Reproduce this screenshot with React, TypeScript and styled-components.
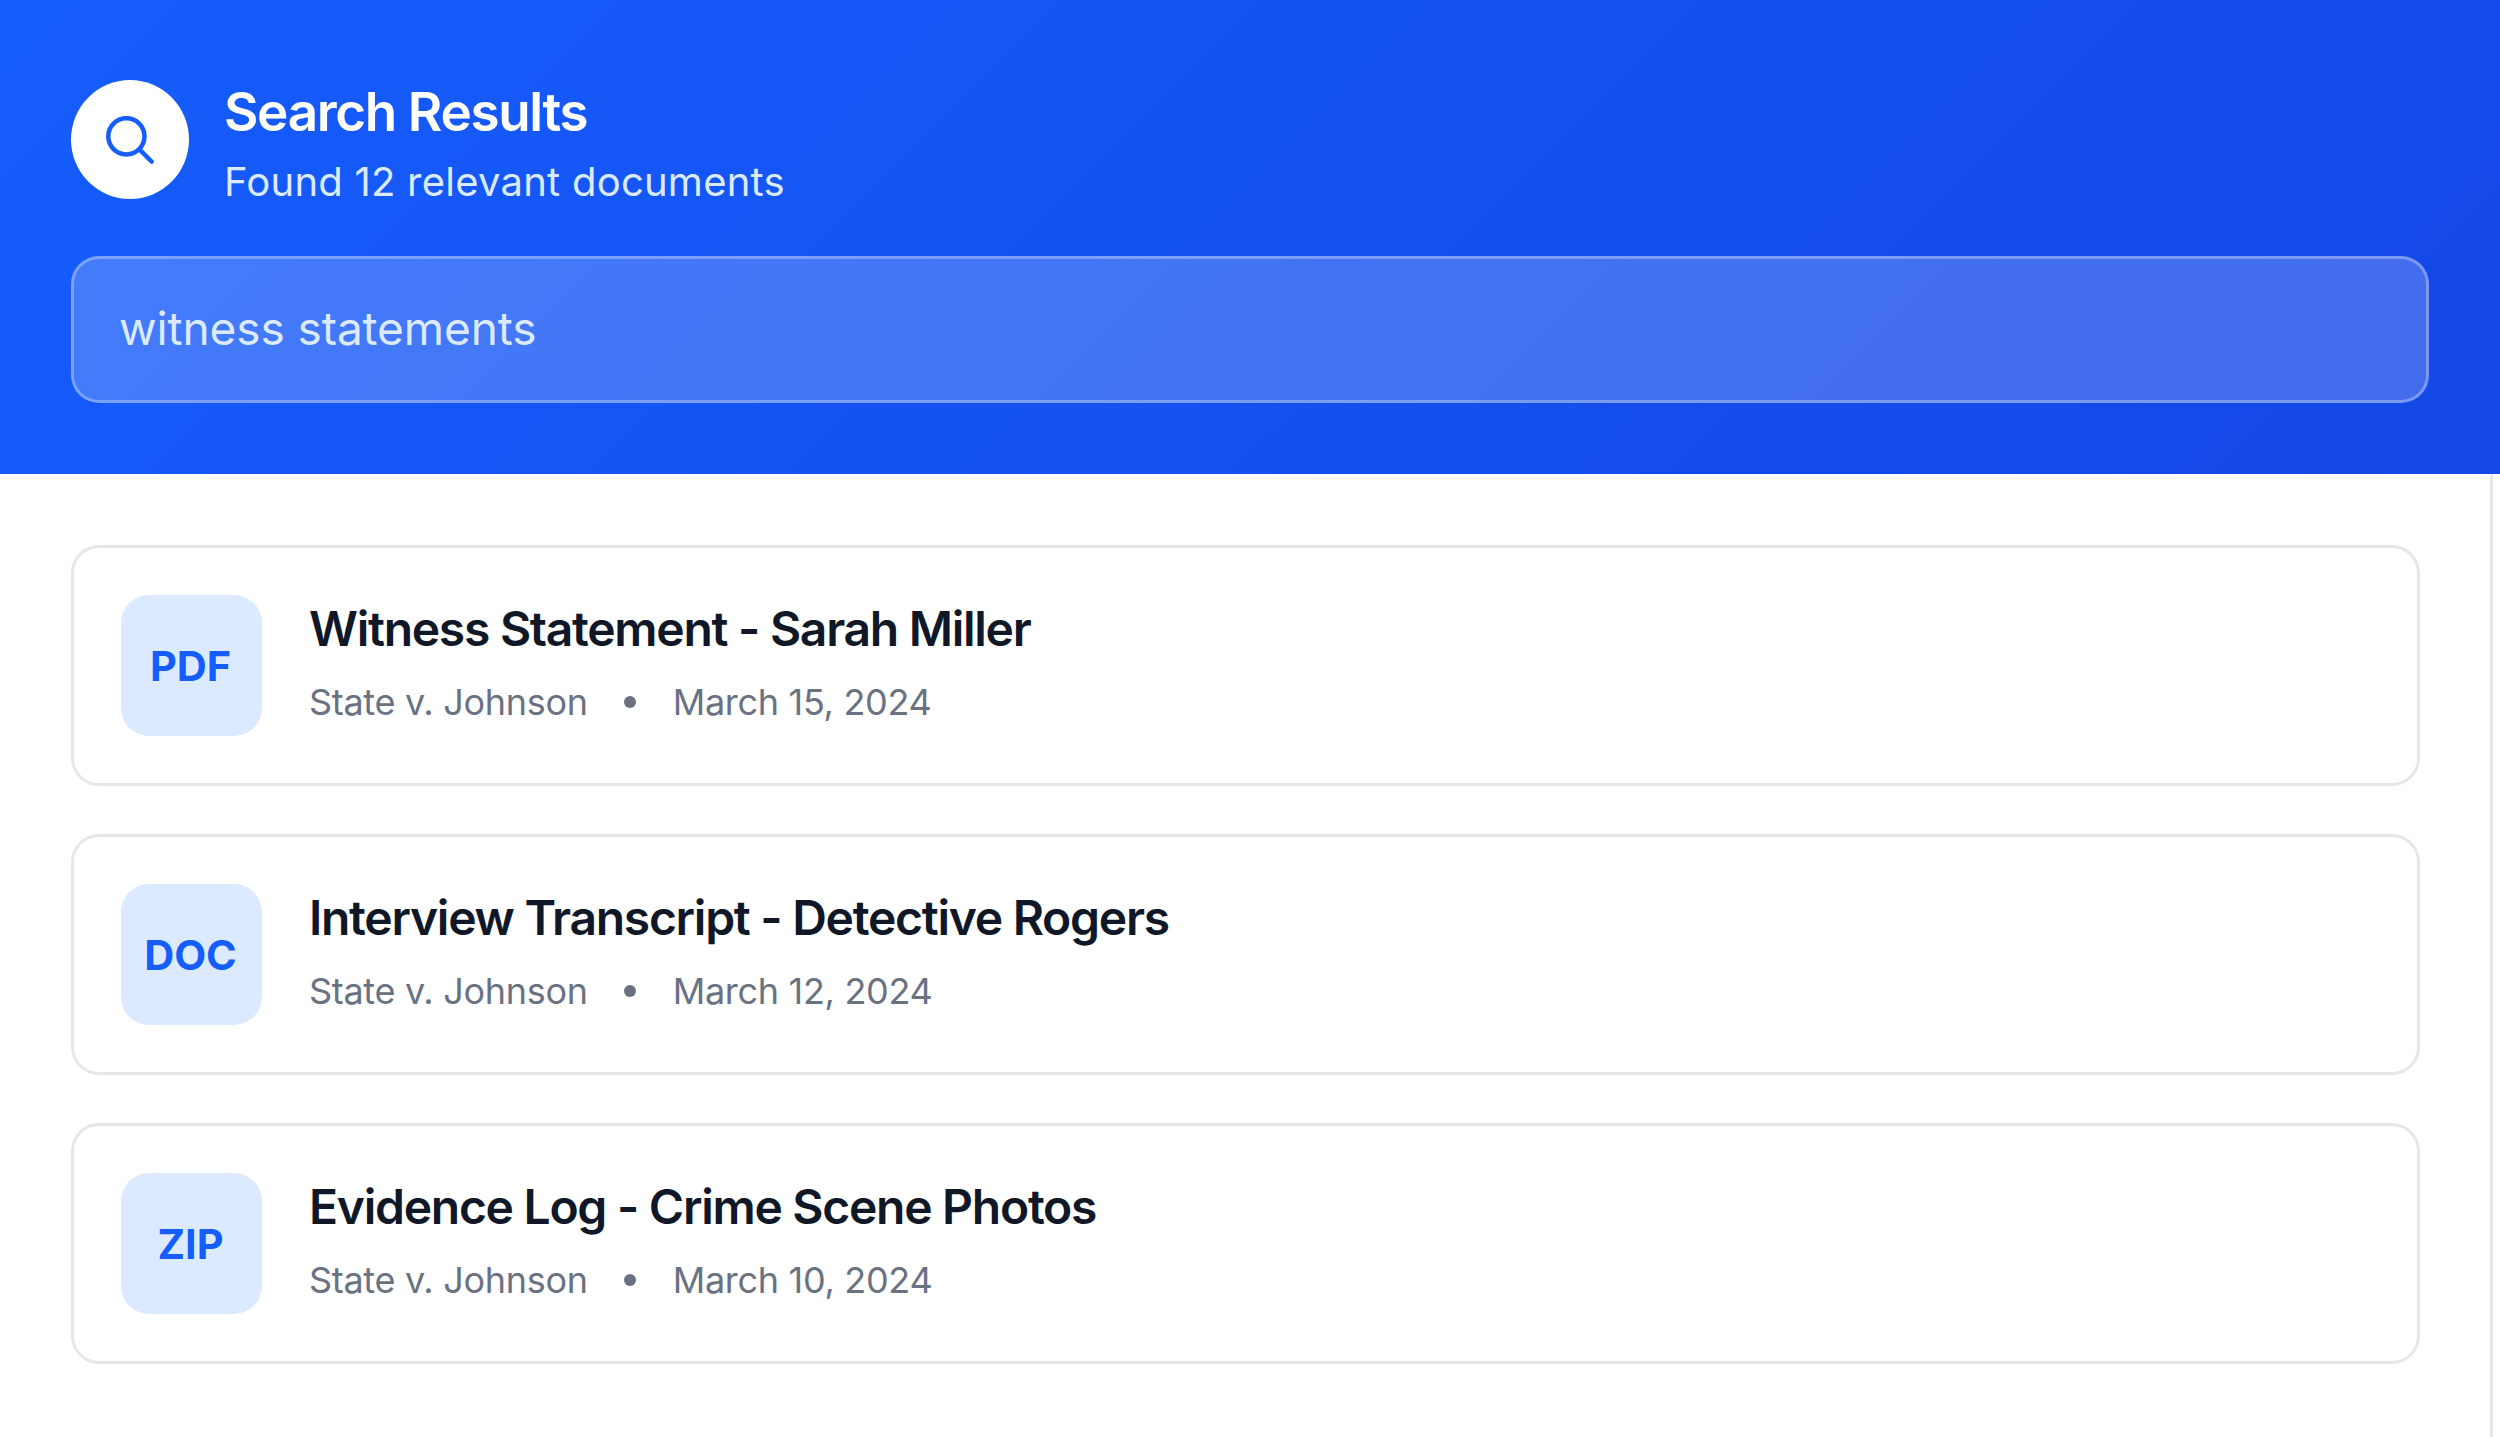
import React from "react";
import styled, { createGlobalStyle } from "styled-components";

const Global = createGlobalStyle`
  html, body { margin: 0; padding: 0; background: #fff; }
  body { font-family: Inter, "Liberation Sans", sans-serif; }
`;
const Page = styled.div`
  width: 2500px;
  height: 1437px;
  overflow: hidden;
  display: flex;
  flex-direction: column;
`;
const Header = styled.header`
  height: 474px;
  box-sizing: border-box;
  padding: 80px 71px 0;
  background: linear-gradient(135deg, #155dfc 0%, #1447e6 100%);
  display: flex;
  flex-direction: column;
  gap: 57px;
`;
const HeaderRow = styled.div`
  display: flex;
  align-items: center;
  gap: 36px;
`;
const IconCircle = styled.div`
  width: 118px;
  height: 119px;
  border-radius: 50%;
  background: #fff;
  display: flex;
  align-items: center;
  justify-content: center;
  flex: none;
`;
const HeadingText = styled.div`
  display: flex;
  flex-direction: column;
  gap: 30px;
  padding-top: 9px;
`;
const Title = styled.h1`
  margin: 0 0 0 -1px;
  font-size: 53px;
  line-height: 46px;
  font-weight: 600;
  letter-spacing: -1.35px;
  color: #fff;
`;
const Subtitle = styled.p`
  margin: 0 0 0 -1px;
  font-size: 40px;
  line-height: 34px;
  letter-spacing: 0.24px;
  color: #dbeafe;
`;
const SearchBox = styled.div`
  box-sizing: border-box;
  width: 2358px;
  height: 147px;
  border: 3px solid rgba(255, 255, 255, 0.3);
  border-radius: 28px;
  background: rgba(255, 255, 255, 0.2);
  padding: 0 45px 3px 45px;
  display: flex;
  align-items: center;
  font-size: 46px;
  letter-spacing: -0.1px;
  color: #dbeafe;
`;
const Results = styled.main`
  box-sizing: border-box;
  flex: 1;
  width: 2493px;
  border-right: 3px solid #e5e7eb;
  padding: 71px 70px 0 71px;
  display: flex;
  flex-direction: column;
  gap: 48px;
`;
const Card = styled.article`
  box-sizing: border-box;
  height: 241px;
  border: 3px solid #e5e7eb;
  border-radius: 28px;
  padding: 0 47px;
  display: flex;
  align-items: center;
  gap: 47px;
`;
const Badge = styled.div`
  box-sizing: border-box;
  width: 141px;
  height: 141px;
  padding-right: 2px;
  border-radius: 28px;
  background: #dbeafe;
  color: #155dfc;
  font-size: 41.5px;
  font-weight: 700;
  display: flex;
  align-items: center;
  justify-content: center;
  flex: none;
`;
const CardBody = styled.div`
  display: flex;
  flex-direction: column;
  gap: 20px;
  padding-bottom: 5px;
`;
const CardTitle = styled.h2`
  margin: 0;
  font-size: 48px;
  line-height: 58px;
  font-weight: 600;
  letter-spacing: -1.27px;
  color: #101828;
`;
const Meta = styled.div`
  display: flex;
  align-items: center;
  gap: 36.5px;
  font-size: 36px;
  line-height: 48px;
  letter-spacing: -0.3px;
  color: #6a7282;
`;
const Dot = styled.span`
  width: 12px;
  height: 12px;
  border-radius: 50%;
  background: #6a7282;
`;

const docs = [
  { type: "PDF", title: "Witness Statement - Sarah Miller", date: "March 15, 2024" },
  { type: "DOC", title: "Interview Transcript - Detective Rogers", date: "March 12, 2024" },
  { type: "ZIP", title: "Evidence Log - Crime Scene Photos", date: "March 10, 2024" },
];

export default function App() {
  return (
    <Page>
      <Global />
      <Header>
        <HeaderRow>
          <IconCircle>
            <svg width="58" height="58" viewBox="0 0 24 24" fill="none" stroke="#155dfc" strokeWidth="1.85" strokeLinecap="round" strokeLinejoin="round">
              <path d="m21 21-5.197-5.197m0 0A7.5 7.5 0 1 0 5.196 5.196a7.5 7.5 0 0 0 10.607 10.607Z" />
            </svg>
          </IconCircle>
          <HeadingText>
            <Title>Search Results</Title>
            <Subtitle>Found 12 relevant documents</Subtitle>
          </HeadingText>
        </HeaderRow>
        <SearchBox>witness statements</SearchBox>
      </Header>
      <Results>
        {docs.map((d) => (
          <Card key={d.type}>
            <Badge>{d.type}</Badge>
            <CardBody>
              <CardTitle>{d.title}</CardTitle>
              <Meta>
                <span>State v. Johnson</span>
                <Dot />
                <span>{d.date}</span>
              </Meta>
            </CardBody>
          </Card>
        ))}
      </Results>
    </Page>
  );
}
